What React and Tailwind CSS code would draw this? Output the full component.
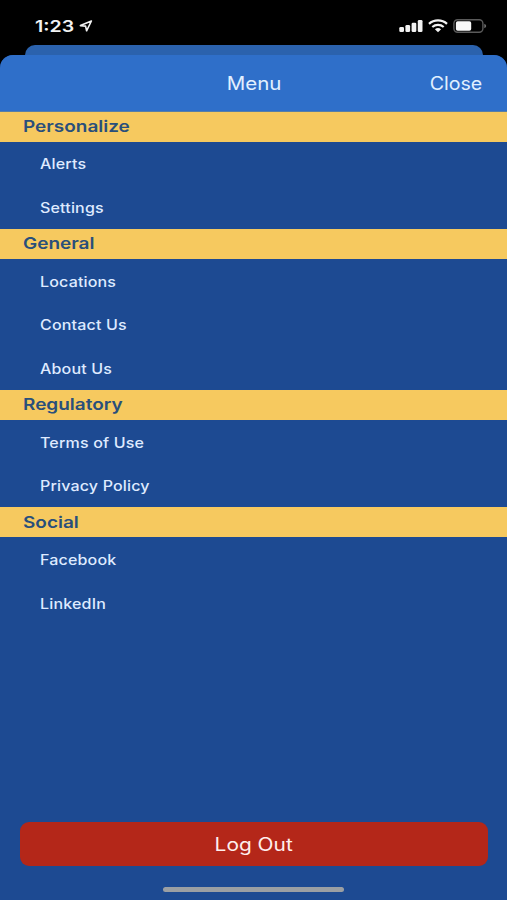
import React from "react";

const sections = [
  { title: "Personalize", items: ["Alerts", "Settings"] },
  { title: "General", items: ["Locations", "Contact Us", "About Us"] },
  { title: "Regulatory", items: ["Terms of Use", "Privacy Policy"] },
  { title: "Social", items: ["Facebook", "LinkedIn"] },
];

const StatusBar = () => (
  <div className="h-[45px] pt-[14px] pl-[35px] pr-[20px] flex items-start justify-between text-[#f2f2f2]">
    <div className="flex items-center h-6">
      <span className="w-[43px] text-[16px] leading-6 font-semibold whitespace-nowrap origin-left scale-x-[1.22]">
        1:23
      </span>
      <svg className="w-[15px] h-[14px]" viewBox="0 0 15 14" fill="none">
        <path
          d="M13.4 2 L2.4 6.6 L7.6 7.1 L8.6 11.8 Z"
          stroke="currentColor"
          strokeWidth="1.6"
          strokeLinejoin="round"
        />
      </svg>
    </div>
    <div className="flex items-center h-6">
      {/* Signal */}
      <svg className="w-6 h-[14px] mr-[5px]" viewBox="0 0 24 14" fill="currentColor">
        <rect x="0.3" y="8" width="4.7" height="5" rx="1.3" />
        <rect x="6.4" y="6" width="4.7" height="7" rx="1.3" />
        <rect x="12.6" y="3.7" width="4.7" height="9.3" rx="1.3" />
        <rect x="18.8" y="1" width="4.7" height="12" rx="1.3" />
      </svg>
      {/* Wifi */}
      <svg className="w-5 h-[14px] mr-[5px]" viewBox="0 0 20 14" fill="none" stroke="currentColor">
        <path d="M1 4.8 C6 0.3 14 0.3 19 4.8" strokeWidth="2.3" />
        <path d="M4.3 8 C7.6 5.1 12.4 5.1 15.7 8" strokeWidth="2.2" />
        <path d="M6.9 10.2 Q10 7.9 13.1 10.2 L10 13.2 Z" fill="currentColor" stroke="none" />
      </svg>
      {/* Battery */}
      <svg className="w-[34px] h-[14px]" viewBox="0 0 34 14">
        <rect x="0.9" y="0.7" width="29" height="12.6" rx="3.7" fill="none" stroke="#5a5a5a" strokeWidth="1.4" />
        <rect x="2.9" y="2.3" width="15.3" height="9.4" rx="1.8" fill="#f8f8f8" />
        <path d="M31.3 4.8 Q33.2 5.5 33.2 7 Q33.2 8.5 31.3 9.2 Z" fill="#707070" />
      </svg>
    </div>
  </div>
);

const MenuSection = ({ title, items }) => (
  <section>
    <h2 className="h-[30px] pl-[23px] flex items-center bg-[#f6c95f] text-[#294f7b] text-[16px] font-semibold">
      <span className="-mt-px origin-left scale-x-[1.185]">{title}</span>
    </h2>
    <ul>
      {items.map((item) => (
        <li key={item} className="h-[43.65px] pt-px pl-10 flex items-center text-[14px] font-[450] text-[#dfeaff]">
          <span className="origin-left scale-x-[1.145] tracking-[0.01em]">{item}</span>
        </li>
      ))}
    </ul>
  </section>
);

const App = () => {
  return (
    <div className="w-full h-[900px] flex flex-col overflow-hidden bg-black font-['Inter',sans-serif]">
      <StatusBar />

      {/* Card behind the open sheet */}
      <div className="h-[10px] ml-[25px] mr-[24px] rounded-t-[10px] bg-[#2b62ad]" />

      <div className="flex-1 flex flex-col overflow-hidden rounded-t-[13px] bg-[#1d4a92]">
        <header className="h-[56.6px] pt-[2px] shrink-0 grid grid-cols-3 items-center bg-[#2f6fc9] border-b border-[#587fa6] text-[18px] text-[#e1f0ff]">
          <span />
          <h1 className="pl-px text-center scale-x-[1.14]">Menu</h1>
          <button className="justify-self-end mr-[25px] origin-right scale-x-[1.09]">Close</button>
        </header>

        <nav>
          {sections.map((section) => (
            <MenuSection key={section.title} title={section.title} items={section.items} />
          ))}
        </nav>

        <div className="mt-auto pl-5 pr-[19px]">
          <button className="w-full h-11 rounded-[9px] bg-[#b42719] text-[18px] text-[#ffefed]">
            <span className="inline-block scale-x-[1.16]">Log Out</span>
          </button>
        </div>
        <div className="w-[181px] h-[5px] mt-[21px] mb-[8px] mx-auto rounded-full bg-[#9b9fa3]" />
      </div>
    </div>
  );
};

export default App;
